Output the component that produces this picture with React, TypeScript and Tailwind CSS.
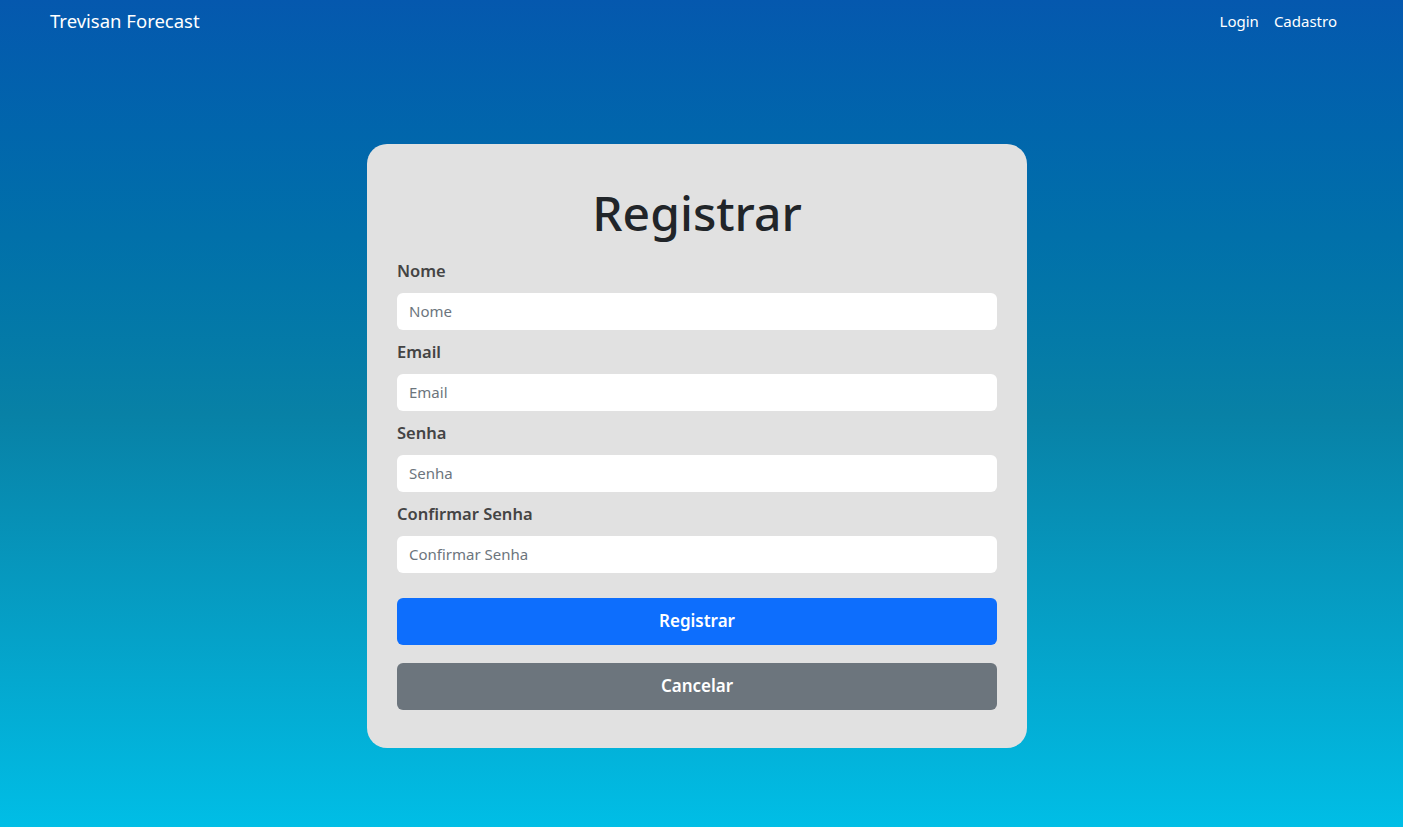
export default function App() {
  return (
    <div
      className="min-h-[827px] w-full flex flex-col bg-gradient-to-b from-[#0558ae] via-[#0881a6] to-[#00bee6]"
      style={{ fontFamily: '"Noto Sans", "Open Sans", sans-serif' }}
    >
      <nav className="h-[42px] flex items-center justify-between pl-[50px] pr-[66px] text-white">
        <span className="text-[18.5px]">Trevisan Forecast</span>
        <div className="flex gap-[15px] text-[15px]">
          <a>Login</a>
          <a>Cadastro</a>
        </div>
      </nav>

      <div className="flex justify-center pt-[102px] pr-[9px]">
        <form className="w-[660px] bg-[#e1e1e1] rounded-[20px] px-[30px] pt-[40px] pb-[38px] flex flex-col">
          <h1 className="text-[48px] leading-[1.2] font-medium text-center text-[#212529] mb-[17px]">
            Registrar
          </h1>
          <Field label="Nome" />
          <Field label="Email" />
          <Field label="Senha" />
          <Field label="Confirmar Senha" />
          <button
            type="button"
            className="mt-[15px] h-[47px] rounded-[6px] bg-[#0d6efd] text-white text-[17px] font-semibold"
          >
            Registrar
          </button>
          <button
            type="button"
            className="mt-[18px] h-[47px] rounded-[6px] bg-[#6c757d] text-white text-[17px] font-semibold"
          >
            Cancelar
          </button>
        </form>
      </div>
    </div>
  )
}

function Field({ label }: { label: string }) {
  return (
    <div className="flex flex-col mb-[10px]">
      <label className="text-[16.5px] leading-[24px] font-semibold text-[#444] mb-[10px]">{label}</label>
      <input
        placeholder={label}
        className="h-[37px] rounded-[6px] bg-white px-[12px] text-[15px] text-[#495057] placeholder:text-[#6c757d] outline-none"
      />
    </div>
  )
}
